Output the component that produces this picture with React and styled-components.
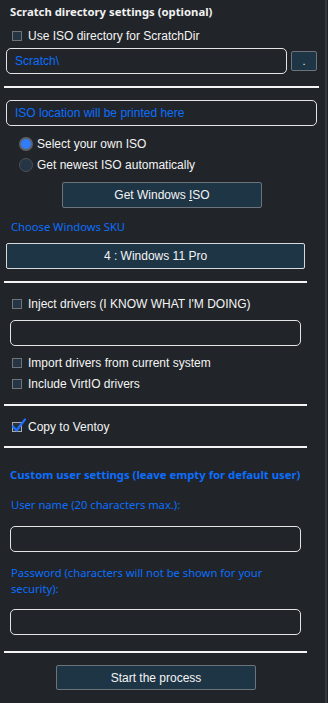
import React from "react";
import styled, { createGlobalStyle } from "styled-components";

const Global = createGlobalStyle`
  html, body { margin: 0; padding: 0; background: #212529; }
  body { font-family: "Liberation Sans", Arial, sans-serif; color: #f4f4f4; }
  * { box-sizing: border-box; }
`;

const Panel = styled.div`
  width: 327px;
  min-height: 703px;
  border-right: 2px solid #35393d;
  background: #212529;
  display: flex;
  flex-direction: column;
  align-items: flex-start;
  padding-top: 4px;
`;

const Title = styled.div`
  font-family: "Noto Sans", "Open Sans", sans-serif;
  font-weight: 700;
  font-size: 11.3px;
  line-height: 16px;
  color: ${(p) => (p.$blue ? "#0d6efd" : "#f2f2f2")};
  margin-top: ${(p) => p.$mt || 0}px;
  margin-left: 10px;
  white-space: nowrap;
`;

const BlueLabel = styled.div`
  font-family: "Noto Sans", "Open Sans", sans-serif;
  font-size: 11.2px;
  line-height: 16px;
  color: #0d6efd;
  margin-top: ${(p) => p.$mt || 0}px;
  margin-left: 11px;
  width: ${(p) => p.$w || "auto"};
`;

const CheckRow = styled.label`
  display: flex;
  align-items: center;
  gap: 6px;
  height: 16px;
  font-size: 12px;
  color: #f4f4f4;
  margin-top: ${(p) => p.$mt || 0}px;
  margin-left: 12px;
`;

const Box = styled.span`
  width: 10px;
  height: 10px;
  border: 1px solid ${(p) => (p.$checked ? "#a9adb1" : "#6e747a")};
  background: #253544;
  position: relative;
  flex: none;
`;

const CheckMark = styled.svg`
  position: absolute;
  left: -2px;
  top: -5px;
`;

const RadioRow = styled.label`
  display: flex;
  align-items: center;
  gap: 4px;
  height: 16px;
  font-size: 12px;
  color: #f4f4f4;
  margin-top: ${(p) => p.$mt || 0}px;
  margin-left: 19px;
`;

const RadioDot = styled.span`
  width: 14px;
  height: 14px;
  border-radius: 50%;
  border: ${(p) => (p.$on ? "2px solid #5d6166" : "1px solid #4b5157")};
  background: ${(p) => (p.$on ? "#2f7dfb" : "#253544")};
  flex: none;
`;

const Field = styled.div`
  height: 26px;
  width: ${(p) => p.$w}px;
  border: 1px solid #e4e4e4;
  border-radius: 5px;
  display: flex;
  align-items: center;
  padding-left: 8px;
  font-size: 12px;
  color: #0d6efd;
`;

const FieldRow = styled.div`
  display: flex;
  align-items: center;
  gap: 4px;
  margin-top: ${(p) => p.$mt || 0}px;
  margin-left: ${(p) => p.$ml || 0}px;
`;

const SmallButton = styled.div`
  width: 26px;
  height: 20px;
  border: 1px solid #6c737a;
  border-radius: 2px;
  background: #1e3546;
  color: #f4f4f4;
  font-size: 11px;
  display: flex;
  align-items: center;
  justify-content: center;
  line-height: 1;
`;

const Button = styled.div`
  width: ${(p) => p.$w}px;
  height: ${(p) => p.$h || 26}px;
  margin-top: ${(p) => p.$mt || 0}px;
  margin-left: ${(p) => p.$ml || 0}px;
  border: 1px solid ${(p) => (p.$light ? "#d9d9d9" : "#6c737a")};
  border-radius: 2px;
  background: #1e3546;
  color: #f4f4f4;
  font-size: 12px;
  display: flex;
  align-items: center;
  justify-content: center;
`;

const Rule = styled.div`
  height: 2px;
  width: ${(p) => p.$w}px;
  background: #f4f4f4;
  margin-top: ${(p) => p.$mt || 0}px;
  margin-left: 4px;
`;

function Check({ mt, checked, children }) {
  return (
    <CheckRow $mt={mt}>
      <Box $checked={checked}>
        {checked && (
          <CheckMark width="16" height="16" viewBox="0 0 16 16">
            <path d="M2 8.5 L5.5 12.5 L14 1.5" stroke="#1f6fff" strokeWidth="2.2" fill="none" strokeLinecap="round" strokeLinejoin="round" />
          </CheckMark>
        )}
      </Box>
      {children}
    </CheckRow>
  );
}

function Radio({ mt, on, children }) {
  return (
    <RadioRow $mt={mt}>
      <RadioDot $on={on} />
      {children}
    </RadioRow>
  );
}

export default function App() {
  return (
    <>
      <Global />
      <Panel>
        <Title>Scratch directory settings (optional)</Title>
        <Check mt={8}>Use ISO directory for ScratchDir</Check>
        <FieldRow $mt={4} $ml={6}>
          <Field $w={281}>Scratch\</Field>
          <SmallButton>.</SmallButton>
        </FieldRow>
        <Rule $w={315} $mt={12} />

        <FieldRow $mt={12} $ml={6}>
          <Field $w={311}>ISO location will be printed here</Field>
        </FieldRow>
        <Radio mt={10} on>Select your own ISO</Radio>
        <Radio mt={5}>Get newest ISO automatically</Radio>
        <Button $w={200} $mt={9} $ml={62}>
          <span>Get Windows <u>I</u>SO</span>
        </Button>
        <BlueLabel $mt={11}>Choose Windows SKU</BlueLabel>
        <Button $w={299} $mt={8} $ml={6} $light>4 : Windows 11 Pro</Button>
        <Rule $w={303} $mt={12} />

        <Check mt={13}>Inject drivers (I KNOW WHAT I'M DOING)</Check>
        <FieldRow $mt={8} $ml={10}>
          <Field $w={291} />
        </FieldRow>
        <Check mt={9}>Import drivers from current system</Check>
        <Check mt={5}>Include VirtIO drivers</Check>
        <Rule $w={303} $mt={12} />
        <Check mt={13} checked>Copy to Ventoy</Check>
        <Rule $w={303} $mt={11} />

        <Title $blue $mt={19}>Custom user settings (leave empty for default user)</Title>
        <BlueLabel $mt={14}>User name (20 characters max.):</BlueLabel>
        <FieldRow $mt={13} $ml={10}>
          <Field $w={291} />
        </FieldRow>
        <BlueLabel $mt={13} $w="290px">
          Password (characters will not be shown for your security):
        </BlueLabel>
        <FieldRow $mt={12} $ml={10}>
          <Field $w={291} />
        </FieldRow>
        <Rule $w={303} $mt={16} />
        <Button $w={200} $h={25} $mt={12} $ml={56}>Start the process</Button>
      </Panel>
    </>
  );
}
